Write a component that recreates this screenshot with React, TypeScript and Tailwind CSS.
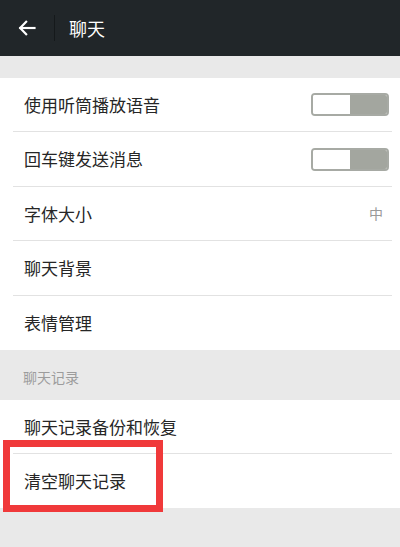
import React from "react"

const font = { fontFamily: '"Noto Sans CJK SC", "Noto Sans", sans-serif' }

function Toggle() {
  return (
    <div className="flex h-[23px] w-[78px] overflow-hidden rounded-[4px] border-2 border-[#a7aaa4] bg-white">
      <div className="w-[37px] bg-white" />
      <div className="flex-1 bg-[#a3a69f]" />
    </div>
  )
}

function Row({ label, right, last, tall }: { label: string; right?: React.ReactNode; last?: boolean; tall?: boolean }) {
  return (
    <div className="pl-[13px] pr-[8px]">
      <div
        className={`flex items-center justify-between pl-[11px] pr-[3px] ${tall ? "h-[55px]" : "h-[54px]"} ${last ? "" : "border-b border-[#e2e2e2]"}`}
      >
        <span className="text-[17px] text-[#262626]">{label}</span>
        {right}
      </div>
    </div>
  )
}

export default function App() {
  return (
    <div className="h-[547px] w-[400px] bg-[#e9e9e9]" style={font}>
      {/* Header */}
      <div className="flex h-[56px] items-center bg-[#212629]">
        <div className="flex w-[54px] justify-center">
          <svg width="20" height="20" viewBox="0 0 24 24" fill="none" stroke="white" strokeWidth={2.6} strokeLinecap="square">
            <path d="M21 12H4" />
            <path d="M11 4.5 3.8 12l7.2 7.5" />
          </svg>
        </div>
        <div className="h-[26px] w-px bg-[#15191b]" />
        <span className="ml-[14px] text-[18px] text-white">聊天</span>
      </div>

      <div className="h-[22px]" />

      <div className="bg-white">
        <Row label="使用听筒播放语音" right={<Toggle />} />
        <Row label="回车键发送消息" right={<Toggle />} tall />
        <Row label="字体大小" right={<span className="mr-[6px] text-[14px] text-[#9a9a9a]">中</span>} />
        <Row label="聊天背景" tall />
        <Row label="表情管理" last />
      </div>

      <div className="flex h-[50px] items-center pl-[23px] pt-[4px] text-[14px] text-[#9c9c9c]">聊天记录</div>

      <div className="bg-white">
        <Row label="聊天记录备份和恢复" />
        <div className="relative">
          <Row label="清空聊天记录" last />
          <div className="absolute left-[3px] top-[-14px] h-[72px] w-[160px] border-[7px] border-[#f0393a]" />
        </div>
      </div>
    </div>
  )
}
